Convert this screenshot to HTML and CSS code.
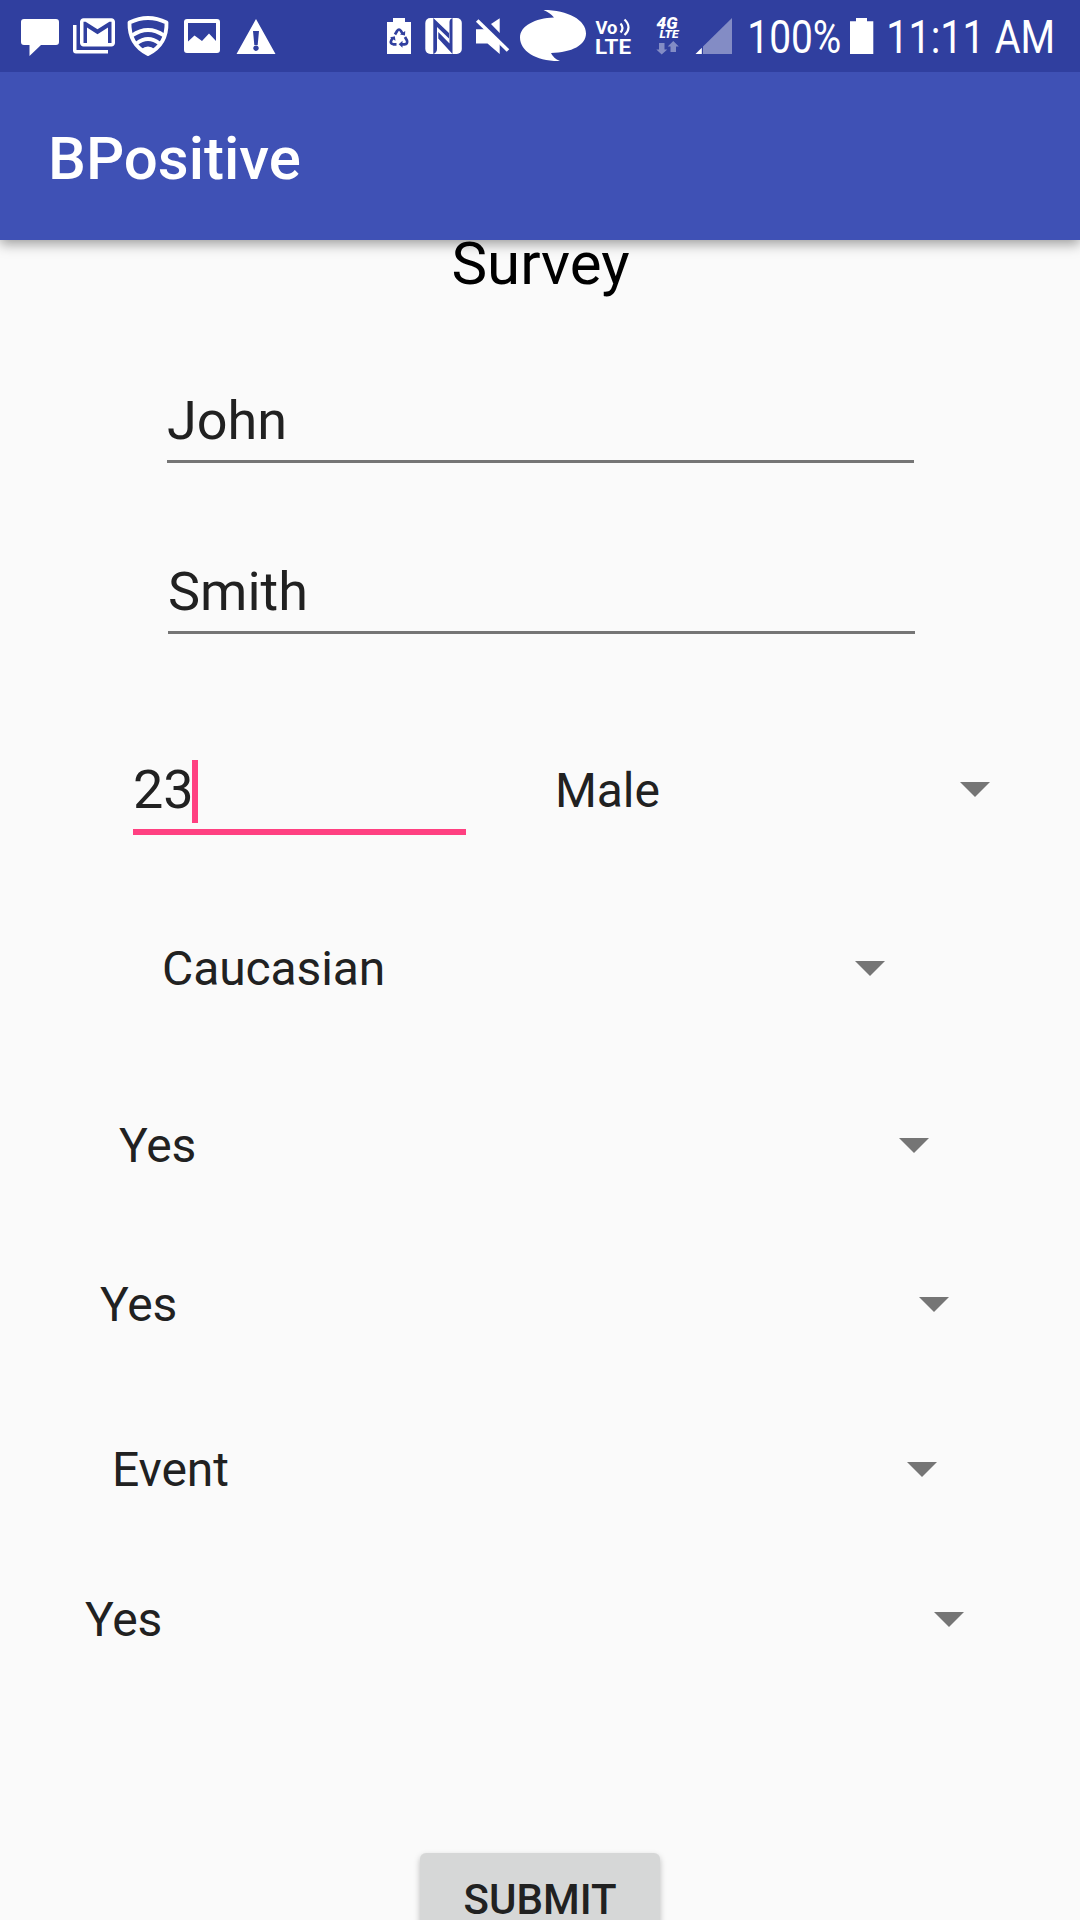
FILE: index.html
```html
<!DOCTYPE html>
<html lang="en">
<head>
<meta charset="utf-8">
<title>BPositive</title>
<link rel="stylesheet" href="styles.css">
</head>
<body>
<div class="screen">
  <header class="header">
    <div class="status">
      <svg width="66" height="72" viewBox="0 0 66 72"><path d="M24 19h32q3 0 3 3v20q0 3-3 3H41L29.5 56V45H24q-3 0-3-3V22q0-3 3-3z"/></svg>
      <svg width="56" height="72" viewBox="66 0 56 72"><path d="M73 25h3.500v25H108v3.500H76q-3 0-3-3z"/><path fill-rule="evenodd" transform="translate(76.500 11.200) scale(1.750 1.770)" d="M20 4H4c-1.100 0-2 .9-2 2v12c0 1.100.9 2 2 2h16c1.100 0 2-.9 2-2V6c0-1.100-.9-2-2-2zm0 14h-2V9.250L12 13 6 9.250V18H4V6h1.200l6.800 4.250L18.800 6H20v12z"/></svg>
      <svg width="54" height="72" viewBox="122 0 54 72"><g class="line"><path stroke-width="3.800" stroke-linejoin="round" d="M129.500 22.500Q148 13.500 166.500 22.500C167 38 160 48 148 54C136 48 129 38 129.500 22.500z"/><path stroke-width="3.800" d="M132 35.500Q148 24.500 164 35.500M136.500 43.500Q148 34.500 159.500 43.500"/></g><path d="M141 49.500Q148 43.500 155 49.500L148 54.500z"/></svg>
      <svg width="52" height="72" viewBox="176 0 52 72"><path fill-rule="evenodd" d="M187 19h30q3 0 3 3v28q0 3-3 3h-30q-3 0-3-3V22q0-3 3-3zm1 4v18.500l6.500-6 7.500 5.500 7-7.500 7 7.500V23z"/></svg>
      <svg width="52" height="72" viewBox="228 0 52 72"><path fill-rule="evenodd" d="M256 19l19.500 35h-39zM253 31l1.300 14h3.400L259 31zM256 45.500a2.700 2.700 0 1 0 .01 0z"/></svg>
      <span class="spacer"></span>
      <svg width="36" height="72" viewBox="380 0 36 72"><path d="M387 22h6v-4h12v4h6v32h-24z"/><g class="cut" stroke-width="2.700"><path d="M395 34.500l2.200-3.800q1.800-2.400 3.600 0l1.700 3M405 37l2 3.600q1 3.500-2.500 3.700H401M396.500 44.300h-3.200q-3.600-.8-2-4l1.700-3"/></g><path class="cut-fill" d="M400 34.500l5 1 .2-4.500zM402.500 40.800v7l-3.800-3.500zM390 37.500l4.800-1.200.7 4.500z"/></svg>
      <svg width="54" height="72" viewBox="416 0 54 72"><rect x="425.300" y="18" width="36.500" height="36" rx="5"/><path class="cut-fill" d="M433.300 18L449 33v5.500L437 27V49q0 3.500-3.700 5zM438.300 32L449.500 43.500V22q0-3 3-4V54L438.300 38.500z"/></svg>
      <svg width="45" height="72" viewBox="470 0 45 72"><path d="M491 24L499.700 18.300V33zM476 29.300h9.500L499.700 43.500V54L487.500 43.500H476z"/><path class="line" stroke-width="3.600" d="M477.200 20.500L508 50.500"/></svg>
      <svg width="75" height="72" viewBox="515 0 75 72"><path d="M543.500 10C568 10 586 20 586 33.500C586 45 572 52.500 551 53Q553 58 560 61C536 61.500 520 51 520 37.500C520 26 535 18 554 17.500Q550 12.500 543.500 10z"/></svg>
      <svg width="50" height="72" viewBox="590 0 50 72"><text class="bold" x="595.500" y="33.700" font-size="18.500" textLength="22" lengthAdjust="spacingAndGlyphs">Vo</text><text class="bold" x="595" y="54" font-size="20.500" textLength="36" lengthAdjust="spacingAndGlyphs">LTE</text><path class="line" stroke-width="2.200" d="M620.500 23.500q4 4.500 0 9M624.500 19.500q8 8 0 15.500"/></svg>
      <svg class="network" width="50" height="72" viewBox="640 0 50 72"><text class="heavy" x="656.500" y="29.300" font-size="16" textLength="21" lengthAdjust="spacingAndGlyphs">4G</text><text class="heavy" x="659.500" y="37.900" font-size="10.500" textLength="19" lengthAdjust="spacingAndGlyphs">LTE</text><path class="dim" d="M659 43h5.500v6.500h2.800L661.700 54.500l-5.400-5H659zM670.500 52h5.500v-5.500h2.800L673.300 41l-5.600 5.500h2.800z"/></svg>
      <svg width="50" height="72" viewBox="690 0 50 72"><path class="dim" d="M703 46.500L732 18v36h-29z"/><path d="M695.500 54l6.300-6.200V54z"/></svg>
      <svg width="104" height="72" viewBox="740 0 104 72"><text x="747.300" y="53" font-size="45.500" textLength="94" lengthAdjust="spacingAndGlyphs">100%</text></svg>
      <svg width="36" height="72" viewBox="844 0 36 72"><path d="M850 21.300h6V18h11v3.300h6.300V54H850z"/></svg>
      <svg width="200" height="72" viewBox="880 0 200 72"><text x="886.200" y="53" font-size="45.500" textLength="169" lengthAdjust="spacingAndGlyphs">11:11 AM</text></svg>
    </div>
    <div class="appbar">BPositive</div>
  </header>
  <main class="form">
    <h1 class="heading">Survey</h1>
    <div class="field first-name">John</div>
    <div class="field last-name">Smith</div>
    <div class="pair">
      <div class="field age">23<span class="caret"></span></div>
      <div class="spinner gender"><span>Male</span><i class="arrow"></i></div>
    </div>
    <div class="spinner ethnicity"><span>Caucasian</span><i class="arrow"></i></div>
    <div class="spinner answer-one"><span>Yes</span><i class="arrow"></i></div>
    <div class="spinner answer-two"><span>Yes</span><i class="arrow"></i></div>
    <div class="spinner event"><span>Event</span><i class="arrow"></i></div>
    <div class="spinner answer-three"><span>Yes</span><i class="arrow"></i></div>
    <button class="submit">SUBMIT</button>
  </main>
</div>
</body>
</html>
```
FILE: styles.css
```css
* { box-sizing: border-box; }
body { margin: 0; background: #fafafa; font-family: Roboto, "Liberation Sans", sans-serif; }
.screen { width: 1080px; height: 1920px; overflow: hidden; display: flex; flex-direction: column; }
.header { position: relative; z-index: 1; flex: none; box-shadow: 0 4px 12px rgba(0, 0, 0, .38); }
.status { display: flex; height: 72px; background: #303f9f; }
.status svg { flex: none; fill: #fff; }
.status .network { overflow: visible; }
.spacer { flex: 1; }
.line { fill: none; stroke: #fff; }
.cut { fill: none; stroke: #303f9f; }
.cut-fill { fill: #303f9f; }
.dim { fill: #838cc5; }
.bold { font-weight: 700; }
.heavy { font-weight: 900; font-style: italic; }
.appbar { height: 168px; padding: 52px 0 0 48px; background: #3f51b5; color: #fff; font-size: 60px; font-weight: 500; line-height: 70px; }
.form { display: flex; flex-direction: column; flex: none; margin-top: -11px; color: #212121; }
.heading { margin: 0; padding-left: 1px; color: #000; text-align: center; font-size: 60px; font-weight: 400; line-height: 70px; }
.field { height: 74px; border-bottom: 3px solid #757575; font-size: 54px; line-height: 63px; }
.first-name { width: 747px; margin: 90px 0 0 167px; }
.last-name { width: 747px; margin: 97px 0 0 168px; }
.pair { display: flex; margin: 124px 90px 0 133px; }
.age { display: flex; width: 333px; height: 77px; border-bottom: 6px solid #ff4081; }
.caret { width: 6px; height: 63px; margin: 2px 0 0 -2px; background: #ff4081; }
.spinner { display: flex; justify-content: space-between; height: 56px; font-size: 48px; line-height: 56px; letter-spacing: -.1px; }
.arrow { width: 30px; height: 15px; margin-top: 20px; background: #757575; clip-path: polygon(0 0, 100% 0, 50% 100%); }
.gender { flex: 1; margin: 4px 0 0 89px; }
.gender span { padding-top: 1px; }
.ethnicity { margin: 106px 195px 0 162px; }
.answer-one { margin: 121px 151px 0 119px; }
.answer-two { margin: 103px 131px 0 100px; }
.event { margin: 109px 143px 0 112px; }
.answer-three { margin: 94px 116px 0 85px; }
.submit { align-self: center; width: 240px; height: 108px; margin-top: 205px; padding: 22px 0 0; display: flex; justify-content: center; align-items: flex-start; border: 0; border-radius: 6px; background: #d6d7d7; box-shadow: 0 3px 6px rgba(0, 0, 0, .26); color: #212121; font: 500 42px/49px Roboto, "Liberation Sans", sans-serif; }
```
